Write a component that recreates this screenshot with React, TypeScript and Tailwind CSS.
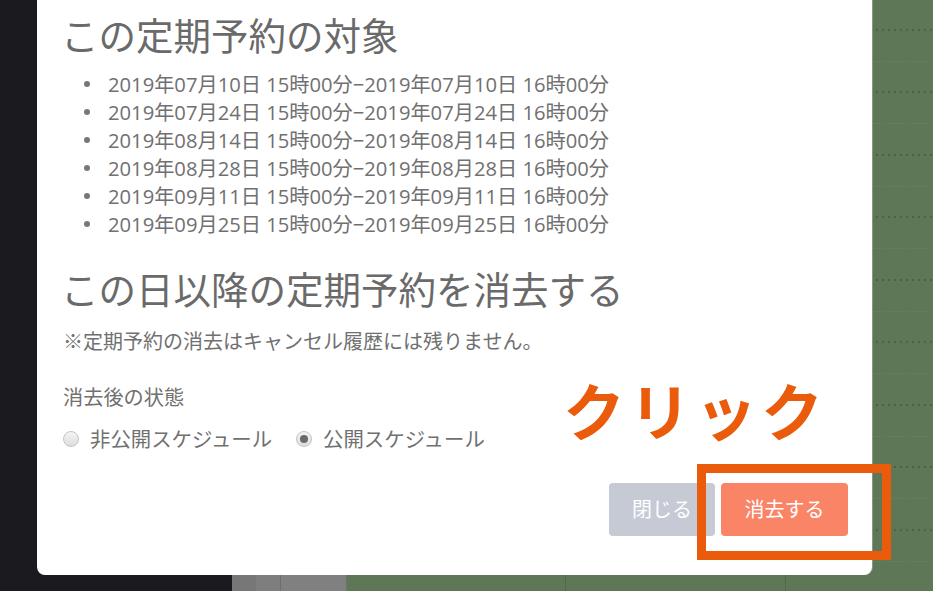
import React from 'react';

const dates = [
  '2019年07月10日',
  '2019年07月24日',
  '2019年08月14日',
  '2019年08月28日',
  '2019年09月11日',
  '2019年09月25日',
];

const Radio: React.FC<{ checked?: boolean; label: string }> = ({ checked, label }) => (
  <label className="flex items-center gap-[11px]">
    <span className="flex h-[16px] w-[16px] items-center justify-center rounded-full border border-[#c4c4c4] bg-[linear-gradient(#f4f4f4,#dedede)]">
      {checked && <span className="h-[8px] w-[8px] rounded-full bg-[#6a6a6a]" />}
    </span>
    <span>{label}</span>
  </label>
);

const Backdrop: React.FC = () => (
  <div className="flex h-full w-full">
    <div className="w-[232px] bg-[#1b1a1f]" />
    <div className="w-[24px] bg-[#777777]" />
    <div className="w-[25px] border-r border-[#6e6e6e] bg-[#7e7e7e]" />
    <div className="w-[66px] border-r border-[#707070] bg-[#808080]" />
    <div className="w-[218px] bg-[#5e7757]" />
    <div className="w-[220px] border-l border-[#51694b] bg-[#5e7757]" />
    <div className="flex flex-1 flex-col border-l border-[#51694b] bg-[#5e7757] pt-[29px]">
      {Array.from({ length: 9 }).map((_, i) => (
        <div key={i} className="h-[64px]">
          <div className="h-[2px] bg-[linear-gradient(to_right,#4b6345_2px,transparent_2px)] bg-[length:6px_2px] bg-repeat-x" />
          <div className="mt-[30px] h-[1px] bg-[linear-gradient(to_right,#6e8767_1px,transparent_1px)] bg-[length:3px_1px] bg-repeat-x" />
        </div>
      ))}
    </div>
  </div>
);

export default function App() {
  return (
    <div className="relative h-[591px] w-[933px] overflow-hidden bg-[#1b1a1f] font-['Open_Sans','Noto_Sans_CJK_JP',sans-serif]">
      <Backdrop />

      {/* modal */}
      <div className="absolute left-[37px] top-[-20px] flex h-[595px] w-[835px] flex-col rounded-b-[8px] bg-white pl-[24px] pr-[24px] text-[#707070] shadow-[1px_0_0_rgba(255,255,255,0.25)]">
        <h2 className="mt-[35px] text-[37.5px] leading-[42px] text-[#6a6a6a]">この定期予約の対象</h2>
        <ul className="mt-[13px] text-[20.2px] leading-[28px]">
          {dates.map((d) => (
            <li key={d} className="flex items-center pl-[23px]">
              <span className="mr-[18px] h-[6px] w-[6px] rounded-full bg-[#777777]" />
              {d} 15時00分−{d} 16時00分
            </li>
          ))}
        </ul>
        <h2 className="mt-[31px] text-[37.5px] leading-[42px] text-[#6a6a6a]">この日以降の定期予約を消去する</h2>
        <div className="pl-[2px]">
          <p className="mt-[17px] text-[20px] leading-[28px]">※定期予約の消去はキャンセル履歴には残りません。</p>
          <p className="mt-[27px] text-[20.2px] leading-[28px]">消去後の状態</p>
          <div className="mt-[14px] flex items-center gap-[24px] text-[20.4px] leading-[28px]">
            <Radio label="非公開スケジュール" />
            <Radio checked label="公開スケジュール" />
          </div>
        </div>
        <div className="mt-[30px] flex justify-end gap-[6px] text-[20px] text-white">
          <button className="h-[53px] w-[106px] rounded-[4px] bg-[#c6cad5]">閉じる</button>
          <button className="h-[53px] w-[127px] rounded-[4px] bg-[#f98566]">消去する</button>
        </div>
      </div>

      {/* annotation */}
      <div className="absolute left-[563px] top-[378px] font-['Noto_Sans_CJK_JP',sans-serif] text-[62px] font-bold leading-none tracking-[4px] text-[#ea5b0c]">
        クリック
      </div>
      <div className="absolute left-[697px] top-[464px] h-[96px] w-[194px] border-[9px] border-[#ea5b0c]" />
    </div>
  );
}
